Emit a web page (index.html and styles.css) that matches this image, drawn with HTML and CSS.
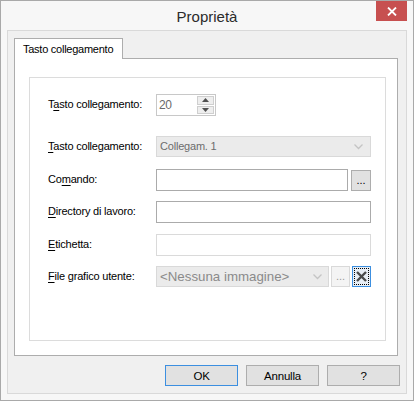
FILE: index.html
```html
<!DOCTYPE html>
<html lang="it">
<head>
<meta charset="utf-8">
<title>Proprietà</title>
<link rel="stylesheet" href="styles.css">
</head>
<body>
<div class="window">
  <div class="titlebar">
    <span class="title">Proprietà</span>
    <div class="close">
      <svg width="10" height="9" viewBox="0 0 10 9"><path d="M1 0.5 L9 8.5 M9 0.5 L1 8.5" stroke="#fff" stroke-width="1.8" fill="none"/></svg>
    </div>
  </div>
  <div class="frame">
    <div class="client">
      <div class="tabs">
        <div class="tab">Tasto collegamento</div>
      </div>
      <div class="panel">
        <div class="group">
          <div class="row r1">
            <label class="lbl">T<u>a</u>sto collegamento:</label>
            <div class="spin">
              <span class="spin-val">20</span>
              <div class="spin-btns">
                <span class="sb"><svg width="7" height="4" viewBox="0 0 7 4"><path d="M3.5 0 L7 4 L0 4 Z" fill="#505050"/></svg></span>
                <span class="sb"><svg width="7" height="4" viewBox="0 0 7 4"><path d="M0 0 L7 0 L3.5 4 Z" fill="#505050"/></svg></span>
              </div>
            </div>
          </div>
          <div class="row r2">
            <label class="lbl"><u>T</u>asto collegamento:</label>
            <div class="combo dis wide">
              <span class="combo-val">Collegam. 1</span>
              <svg class="chev" width="9" height="6" viewBox="0 0 9 6"><path d="M0.5 0.5 L4.5 4.5 L8.5 0.5" stroke="#c4c4c4" stroke-width="1.3" fill="none"/></svg>
            </div>
          </div>
          <div class="row r3">
            <label class="lbl">Co<u>m</u>ando:</label>
            <div class="tb cmd"></div>
            <div class="dots">...</div>
          </div>
          <div class="row r4">
            <label class="lbl"><u>D</u>irectory di lavoro:</label>
            <div class="tb wide"></div>
          </div>
          <div class="row r5">
            <label class="lbl"><u>E</u>tichetta:</label>
            <div class="tb wide disabled"></div>
          </div>
          <div class="row r6">
            <label class="lbl"><u>F</u>ile grafico utente:</label>
            <div class="combo dis img">
              <span class="combo-val big">&lt;Nessuna immagine&gt;</span>
              <svg class="chev" width="9" height="6" viewBox="0 0 9 6"><path d="M0.5 0.5 L4.5 4.5 L8.5 0.5" stroke="#c4c4c4" stroke-width="1.3" fill="none"/></svg>
            </div>
            <div class="dots off">...</div>
            <div class="xbtn">
              <div class="focus">
                <svg width="11" height="11" viewBox="0 0 11 11"><path d="M1 1 L10 10 M10 1 L1 10" stroke="#4a4a4a" stroke-width="2.4" fill="none"/></svg>
              </div>
            </div>
          </div>
        </div>
      </div>
      <div class="buttons">
        <div class="btn default">OK</div>
        <div class="btn">Annulla</div>
        <div class="btn">?</div>
      </div>
    </div>
  </div>
</div>
</body>
</html>
```
FILE: styles.css
```css
* { box-sizing: border-box; }
body {
  margin: 0;
  font-family: "Liberation Sans", Arial, sans-serif;
  font-size: 11px;
  color: #000;
  background: #fff;
}
.window {
  width: 414px;
  height: 401px;
  border: 1px solid #a9a9a9;
  background: #f7f7f7;
  display: flex;
  flex-direction: column;
}
.titlebar {
  height: 29px;
  position: relative;
  display: flex;
  align-items: center;
  justify-content: center;
}
.title {
  font-size: 15px;
  color: #2b2b2b;
  padding-top: 1px;
}
.close {
  position: absolute;
  top: 0;
  right: 6px;
  width: 31px;
  height: 20px;
  background: #c75050;
  display: flex;
  align-items: center;
  justify-content: center;
}
.frame {
  flex: 1;
  padding: 0 6px 6px 6px;
  display: flex;
}
.client {
  flex: 1;
  border: 1px solid #d9d9d9;
  background: #f0f0f0;
  padding: 7px 6px 0 6px;
  display: flex;
  flex-direction: column;
}
.tabs {
  display: flex;
}
.tab {
  position: relative;
  z-index: 1;
  width: 109px;
  height: 21px;
  margin-bottom: -1px;
  border: 1px solid #adadad;
  border-bottom: none;
  background: #fff;
  padding-left: 8px;
  display: flex;
  align-items: center;
  letter-spacing: -0.25px;
  padding-bottom: 1px;
}
.panel {
  margin-right: 2px;
  height: 298px;
  border: 1px solid #adadad;
  background: #fff;
  display: flex;
  flex-direction: column;
}
.group {
  flex: 1;
  margin: 18px 11px 14px 14px;
  border: 1px solid #dcdcdc;
  padding: 16px 14px 0 18px;
  display: flex;
  flex-direction: column;
}
.row {
  display: flex;
  align-items: center;
  height: 22px;
}
.r2 { margin-top: 20px; height: 21px; }
.r3 { margin-top: 12px; }
.r4 { margin-top: 10px; }
.r5 { margin-top: 11px; }
.r6 { margin-top: 10px; height: 21px; }
.lbl {
  width: 108px;
  flex: none;
  letter-spacing: -0.2px;
  padding-bottom: 2px;
}
.lbl u { text-decoration-thickness: 1px; text-underline-offset: 2px; }
.spin {
  width: 60px;
  height: 22px;
  display: flex;
  border: 1px solid #c8c8c8;
}
.spin-val {
  flex: 1;
  padding-left: 2px;
  padding-top: 3px;
  color: #6a6a6a;
  font-size: 12px;
  letter-spacing: -0.3px;
}
.spin-btns {
  width: 18px;
  display: flex;
  flex-direction: column;
  padding: 1px 1px 1px 0;
  gap: 1px;
}
.sb {
  flex: 1;
  border: 1px solid #cfcfcf;
  background: #eeeeee;
  display: flex;
  align-items: center;
  justify-content: center;
}
.wide { width: 215px; }
.combo {
  height: 21px;
  display: flex;
  align-items: center;
  justify-content: space-between;
  padding: 0 7px 1px 3px;
}
.combo.dis {
  border: 1px solid #d9d9d9;
  background: #ebebeb;
  color: #6d6d6d;
}
.combo-val { letter-spacing: -0.2px; }
.combo-val.big {
  font-size: 13.3px;
  letter-spacing: 0;
  color: #8a8a8a;
}
.chev { flex: none; margin-top: 1px; }
.combo.img { width: 173px; padding-right: 6px; }
.tb {
  height: 22px;
  border: 1px solid #ababab;
  background: #fff;
}
.tb.disabled { border-color: #dadada; }
.tb.cmd { width: 192px; }
.dots {
  width: 20px;
  height: 21px;
  margin-left: 3px;
  margin-top: 1px;
  border: 1px solid #adadad;
  background: #e1e1e1;
  display: flex;
  align-items: flex-end;
  justify-content: center;
  padding-bottom: 4px;
  font-size: 11px;
  line-height: 1;
}
.dots.off {
  width: 19px;
  margin-left: 2px;
  margin-top: 0;
  border-color: #d9d9d9;
  background: #f4f4f4;
  color: #9a9a9a;
}
.xbtn {
  width: 19px;
  height: 21px;
  margin-left: 2px;
  border: 1px solid #3c8fe0;
  background: #e8eef5;
  padding: 1px;
}
.focus {
  width: 100%;
  height: 100%;
  border: 1px dotted #000;
  display: flex;
  align-items: center;
  justify-content: center;
}
.buttons {
  margin-top: 9px;
  display: flex;
  justify-content: flex-end;
  gap: 8px;
}
.btn {
  width: 73px;
  height: 21px;
  border: 1px solid #adadad;
  background: #e1e1e1;
  display: flex;
  align-items: center;
  justify-content: center;
  letter-spacing: -0.2px;
  font-size: 11.5px;
}
.btn.default { border-color: #3c8fe0; }
```
